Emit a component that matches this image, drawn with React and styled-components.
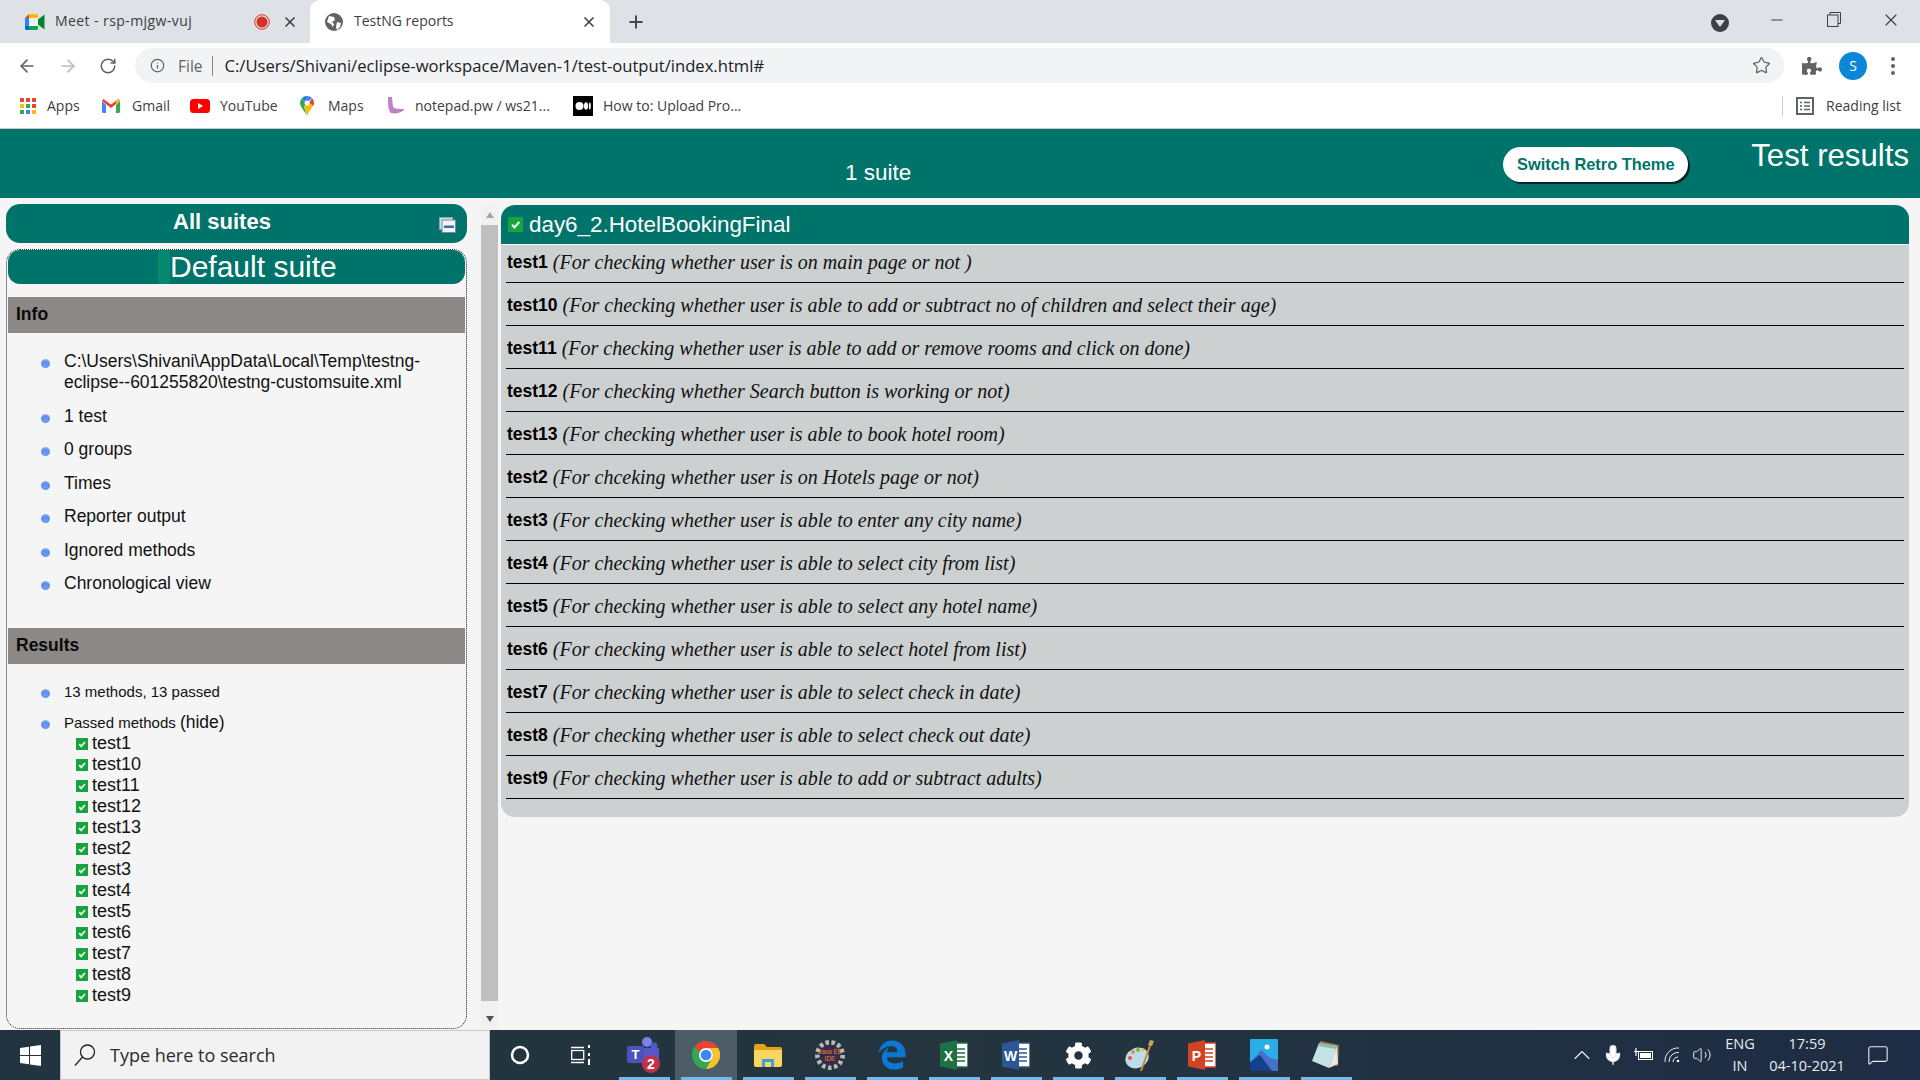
import React from "react";
import styled, { createGlobalStyle } from "styled-components";
import { ArrowLeft, ArrowRight, RotateCw, Info, Star, X, Plus, Minus, ChevronUp, Mic, Volume2, MessageSquare } from "lucide-react";
import { FaPuzzlePiece, FaCog } from "react-icons/fa";
import { FaEdgeLegacy } from "react-icons/fa6";

const TEAL = "#00746a";
const UI = '"Open Sans", "Liberation Sans", sans-serif';
const SANS = '"Liberation Sans", Arial, sans-serif';
const SERIF = '"Liberation Serif", "Times New Roman", serif';

const Global = createGlobalStyle`
  html, body { margin: 0; padding: 0; width: 1920px; height: 1080px; overflow: hidden; background: #f5f5f5; }
  * { box-sizing: border-box; }
`;

const Page = styled.div`display:flex;flex-direction:column;width:1920px;height:1080px;overflow:hidden;font-family:${SANS};color:#000;`;

/* Browser chrome */
const TabStrip = styled.div`display:flex;align-items:stretch;height:43px;background:#dee1e6;flex:none;`;
const Tab = styled.div`
  display:flex;align-items:center;width:${p => p.$w}px;padding-left:${p => p.$pl}px;
  font:14px ${UI};color:#3c4043;
  ${p => p.$active && "background:#fff;border-radius:10px 10px 0 0;"}
`;
const TabTitle = styled.span`margin-left:${p => p.$ml}px;flex:1;white-space:nowrap;margin-top:-2px;letter-spacing:${p => p.$ls || 0}px;`;
const TabClose = styled(X)`margin-right:${p => p.$mr}px;margin-left:${p => p.$ml || 0}px;color:#3c4043;flex:none;`;
const NewTab = styled(Plus)`align-self:center;margin-left:16px;color:#45494d;`;
const WindowControls = styled.div`margin-left:auto;margin-right:1px;display:flex;align-items:center;color:#3c4043;`;
const WindowBtn = styled.div`display:flex;justify-content:center;width:57px;margin-top:-4px;`;
const DownloadDot = styled.div`
  width:18px;height:18px;border-radius:50%;background:#3c4043;margin-right:19px;margin-top:2px;
  display:flex;align-items:center;justify-content:center;
  &::after{content:"";border-left:5px solid transparent;border-right:5px solid transparent;border-top:7px solid #dee1e6;margin-top:2px;}
`;

const Toolbar = styled.div`display:flex;align-items:center;height:40px;background:#fff;padding-top:5px;flex:none;`;
const NavIcons = styled.div`display:flex;align-items:center;gap:21px;padding-left:17px;width:135px;`;
const Omnibox = styled.div`
  display:flex;align-items:center;width:1649px;height:35px;border-radius:18px;background:#f1f3f4;padding-left:15px;
  font:14.5px ${UI};color:#5f6368;
`;
const OmniFile = styled.span`margin-left:13px;font-size:15.5px;`;
const OmniSep = styled.span`width:1px;height:20px;background:#80868b;margin:0 12px 0 9px;`;
const OmniUrl = styled.span`color:#202124;font-size:16.64px;flex:1;white-space:nowrap;`;
const OmniStar = styled(Star)`margin-right:13px;color:#5f6368;`;
const ToolIcons = styled.div`display:flex;align-items:center;color:#5f6368;padding-left:18px;`;
const Avatar = styled.div`
  width:28px;height:28px;border-radius:50%;background:#0b87da;color:#fff;font:14px ${UI};
  display:flex;align-items:center;justify-content:center;margin-left:17px;
`;
const MenuDots = styled.div`display:flex;flex-direction:column;gap:3px;margin-left:24px;
  span{width:4px;height:4px;border-radius:50%;background:#5f6368;}`;

const Bookmarks = styled.div`
  display:flex;align-items:center;height:46px;background:#fff;border-bottom:1px solid #c9cbcd;padding-left:20px;flex:none;
  font:14px ${UI};color:#3c4043;
`;
const Bookmark = styled.div`display:flex;align-items:center;width:${p => p.$w}px;white-space:nowrap;
  span{margin-left:${p => p.$gap}px;}`;
const BookmarkDivider = styled.div`width:1px;height:20px;background:#c9cbcd;margin-left:auto;`;
const ReadingList = styled.div`display:flex;align-items:center;gap:12px;margin:0 19px 0 13px;`;

/* Report header */
const ReportHeader = styled.div`display:flex;height:69px;background:${TEAL};color:#fff;flex:none;position:relative;`;
const SuiteCount = styled.div`font:22.5px ${SANS};margin:30px 0 0 845px;line-height:28px;`;
const ThemeBtn = styled.div`
  margin:18px 0 0 auto;width:185px;height:35px;border-radius:18px;background:#fff;color:${TEAL};padding-bottom:1px;
  box-shadow:2px 2px 0 #07232a;font:bold 16.4px ${SANS};display:flex;align-items:center;justify-content:center;
`;
const ReportTitle = styled.div`font:31.2px ${SANS};margin:9px 11px 0 63px;line-height:36px;white-space:nowrap;`;

/* Main */
const Main = styled.div`display:flex;height:832px;background:#f5f5f5;padding:6px 0 0 6px;flex:none;overflow:hidden;`;
const Sidebar = styled.div`width:461px;display:flex;flex-direction:column;flex:none;`;
const AllSuites = styled.div`
  height:39px;border-radius:14px;background:${TEAL};color:#fff;font:bold 22px ${SANS};position:relative;
  display:flex;align-items:center;justify-content:center;padding:0 29px 3px 0;
`;
const CollapseIcon = styled.svg`position:absolute;right:11px;top:13px;`;
const SuitePanel = styled.div`
  margin-top:6px;height:780px;border:1px dotted #222;border-radius:14px;padding:0 1px;flex:none;
`;
const DefaultSuite = styled.div`
  height:34px;border-radius:12px;background:${TEAL};color:#fff;font:30px ${SANS};line-height:34px;
  display:flex;padding-left:150px;
`;
const SuiteMark = styled.span`width:12px;background:#058a70;border-radius:2px;`;
const SectionHead = styled.div`
  margin-top:${p => p.$mt}px;height:36px;background:#8c8886;font:bold 17.5px ${SANS};padding:0 8px 1px;
  display:flex;align-items:center;color:#0a0a0a;
`;
const BulletList = styled.div`display:flex;flex-direction:column;gap:${p => p.$gap}px;padding:${p => p.$pt}px 0 0 33px;`;
const BulletRow = styled.div`display:flex;align-items:flex-start;font:${p => p.$fs || 17.5}px/21px ${SANS};color:#111;`;
const Bullet = styled.i`
  width:9px;height:9px;border-radius:50%;flex:none;margin:8px 14px 0 0;
  background:radial-gradient(circle at 50% 75%,#6d9cf5 0%,#5e8fe8 55%,#c9d8f5 100%);
`;
const Big = styled.span`font-size:17.5px;`;
const PassedList = styled.div`display:flex;flex-direction:column;padding-left:68px;`;
const PassedRow = styled.div`display:flex;align-items:center;gap:4px;height:21px;font:18px/21px ${SANS};color:#111;`;

/* Scrollbar */
const Scrollbar = styled.div`
  width:17px;margin-left:14px;background:#f1f1f1;display:flex;flex-direction:column;align-items:center;flex:none;
`;
const ArrowUp = styled.i`margin-top:8px;border-left:4.5px solid transparent;border-right:4.5px solid transparent;border-bottom:6px solid #a3a3a3;`;
const Thumb = styled.div`width:17px;height:776px;background:#bfbfbf;margin-top:7px;`;
const ArrowDown = styled.i`margin-top:15px;border-left:4.5px solid transparent;border-right:4.5px solid transparent;border-top:6px solid #505050;`;

/* Content */
const Content = styled.div`width:1408px;margin:1px 0 0 3px;flex:none;`;
const ClassHead = styled.div`
  height:39px;background:${TEAL};color:#fff;border-radius:14px 14px 0 0;display:flex;align-items:center;
  padding:0 0 0 7px;font:22.4px ${SANS};gap:6px;
`;
const MethodPanel = styled.div`
  margin-top:1px;background:#cdd0d1;border-radius:0 0 14px 14px;padding:0 5px 18px 5px;display:flex;flex-direction:column;gap:5px;
`;
const MethodRow = styled.div`
  height:38px;border-bottom:1px solid #000;display:flex;align-items:center;gap:5px;padding:0 0 3px 1px;white-space:nowrap;
`;
const MethodName = styled.b`font:bold 17.5px ${SANS};color:#000;`;
const MethodDesc = styled.em`font:italic 20px ${SERIF};color:#111;`;

/* Taskbar */
const Taskbar = styled.div`
  display:flex;align-items:stretch;height:50px;flex:none;color:#fff;
  background:linear-gradient(90deg,#22343f 0%,#24353f 50%,#1e2c45 100%);
`;
const StartBtn = styled.div`width:60px;display:flex;align-items:center;justify-content:center;`;
const SearchBox = styled.div`
  width:430px;background:#f2f2f2;border:1px solid #c8c8c8;display:flex;align-items:center;
  font:18px ${UI};color:#2b2b2b;padding-left:13px;gap:14px;
`;
const TaskApps = styled.div`display:flex;margin-left:-1px;`;
const TaskApp = styled.div`
  width:62px;display:flex;align-items:center;justify-content:center;position:relative;padding-right:${p => p.$pr || 0}px;
  ${p => p.$active && "background:#4d5d67;"}
  ${p => p.$running && `&::after{content:"";position:absolute;left:6px;right:5px;bottom:0;height:3px;background:#76b9ed;}`}
`;
const Tray = styled.div`display:flex;align-items:center;margin-left:auto;font:14px ${UI};color:#e8ebef;`;
const TrayIcons = styled.div`display:flex;align-items:center;gap:10px;`;
const TrayChevron = styled(ChevronUp)`margin:0 -4px;`;
const Lang = styled.div`display:flex;flex-direction:column;align-items:center;margin-left:5px;width:46px;line-height:22px;font-size:14.5px;`;
const Clock = styled.div`display:flex;flex-direction:column;align-items:center;margin-left:2px;width:84px;line-height:22px;font-size:14.5px;`;
const NotifyWrap = styled.div`margin:0 31px 0 18px;display:flex;`;

/* Drawn icons */
const Tick = ({ s = 12 }) => (
  <svg width={s} height={s} viewBox="0 0 12 12"><rect width="12" height="12" fill="#16a340" /><path d="M3.2 6.2 5.2 8.300 9 4" fill="none" stroke="#e8f6ea" strokeWidth="1.800" /></svg>
);
const MeetIcon = () => (
  <svg width="20" height="18" viewBox="0 0 20 18"><path d="M4 1 0 5h4z" fill="#ea4335" /><path d="M0 5h4v8H0z" fill="#2684fc" /><path d="M0 13h4v4H1.500A1.500 1.500 0 0 1 0 15.500z" fill="#0066da" /><path d="M4 1h7.500A1.500 1.500 0 0 1 13 2.500V5H4z" fill="#ffba00" /><path d="M4 13h9v2.500a1.500 1.500 0 0 1-1.500 1.500H4z" fill="#00ac47" /><path d="M4 5h9v8H4z" fill="#eef1f4" /><path d="M13 6.500 19.500 1.500V16.500L13 11.500z" fill="#00832d" /></svg>
);
const RecIcon = () => (
  <svg width="16" height="16" viewBox="0 0 16 16"><circle cx="8" cy="8" r="7.300" fill="none" stroke="#d93025" /><circle cx="8" cy="8" r="5.500" fill="#d93025" /></svg>
);
const GlobeIcon = () => (
  <svg width="18" height="18" viewBox="0 0 18 18"><circle cx="9" cy="9" r="9" fill="#5f6368" /><path d="M4 3l5 1 1 3-3 2 2 2-1 3-2-3-4-2zM12 9l4 1-1 4-3 3-1-3z" fill="#fff" /></svg>
);
const AppsIcon = () => (
  <svg width="16" height="16" viewBox="0 0 16 16">
    {[["#ea4335","#ea4335","#ea4335"],["#fbbc04","#34a853","#ea4335"],["#34a853","#4285f4","#fbbc04"]].map((r, y) => r.map((c, x) => <rect key={`${x}${y}`} x={x * 6} y={y * 6} width="4" height="4" fill={c} />))}
  </svg>
);
const GmailIcon = () => (
  <svg width="18" height="14" viewBox="0 0 18 14"><path d="M0 2v10.500A1.500 1.500 0 0 0 1.500 14H4V6z" fill="#4285f4" /><path d="M18 2v10.500a1.500 1.500 0 0 1-1.500 1.500H14V6z" fill="#34a853" /><path d="M0 2l9 7 9-7-1.500-2L9 5.500 1.500 0z" fill="#ea4335" /><path d="M14 2l2.500-2L18 2l-4 4z" fill="#fbbc04" /></svg>
);
const YTIcon = () => (
  <svg width="20" height="14" viewBox="0 0 20 14"><rect width="20" height="14" rx="3.500" fill="#f00" /><path d="M8 4l5 3-5 3z" fill="#fff" /></svg>
);
const MapsIcon = () => (
  <svg width="14" height="20" viewBox="0 0 14 20"><path d="M7 20C5 15 0 11 0 7a7 7 0 0 1 2-5l5 5-3 4c1 2 2 4 3 9z" fill="#34a853" /><path d="M2 2a7 7 0 0 1 5-2l-1 4-1 1z" fill="#1a73e8" /><path d="M7 0a7 7 0 0 1 5 2L7 7 5 5z" fill="#4285f4" /><path d="M12 2a7 7 0 0 1 2 5c0 1-.3 2-.8 3L9 7z" fill="#ea4335" /><path d="M13 10c-1.500 3-5 6-6 10 0-4-1-6-3-9l5-4z" fill="#fbbc04" /><circle cx="7" cy="7" r="2.500" fill="#fff" /></svg>
);
const NotepadIcon = () => (
  <svg width="17" height="18" viewBox="0 0 17 18"><path d="M1 0h4l1 10c2 2 6 2 11 2v1c-3 3-9 4-13 3C1 14 1 5 1 0z" fill="#c27fc6" /></svg>
);
const MediumIcon = () => (
  <svg width="20" height="20" viewBox="0 0 20 20"><rect width="20" height="20" fill="#000" /><circle cx="6.500" cy="10" r="4" fill="#fff" /><ellipse cx="13" cy="10" rx="2" ry="3.800" fill="#fff" /><ellipse cx="16.800" cy="10" rx="1" ry="3.500" fill="#fff" /></svg>
);
const ReadingIcon = () => (
  <svg width="18" height="18" viewBox="0 0 18 18" fill="none" stroke="#5f6368"><rect x="1" y="1" width="16" height="16" strokeWidth="2" /><path d="M4 5.500h2M8 5.500h6M4 9h2M8 9h6M4 12.500h2M8 12.500h6" strokeWidth="1.500" /></svg>
);
const WinLogo = () => (
  <svg width="21" height="21" viewBox="0 0 21 21" fill="#fff"><path d="M0 3l9-1.300V10H0zM10 1.500 21 0v10H10zM0 11h9v8.300L0 18zM10 11h11v10l-11-1.500z" /></svg>
);
const SearchGlass = () => (
  <svg width="22" height="24" viewBox="0 0 22 24" fill="none" stroke="#222" strokeWidth="1.300"><circle cx="13.500" cy="9" r="7" /><path d="M8.500 14 1 22.500" /></svg>
);
const Cortana = () => <svg width="20" height="20" viewBox="0 0 20 20"><circle cx="10" cy="10" r="8" fill="none" stroke="#fff" strokeWidth="2.500" /></svg>;
const TaskView = () => (
  <svg width="20" height="20" viewBox="0 0 20 20" fill="none" stroke="#fff" strokeWidth="1.300"><path d="M0 2.500h13M0 17.500h13" /><rect x=".7" y="5.500" width="12" height="9" /><path d="M18 0v3M18 8v3M18 14v6" strokeWidth="2" /></svg>
);
const Teams = () => (
  <svg width="34" height="36" viewBox="0 0 34 36"><circle cx="20" cy="5" r="5" fill="#7b83eb" /><circle cx="27" cy="9" r="3.500" fill="#5059c9" /><path d="M14 11h18v11a7 7 0 0 1-7 7h-4a7 7 0 0 1-7-7z" fill="#5059c9" /><rect x="0" y="9" width="17" height="17" rx="2" fill="#4b53bc" /><text x="8.500" y="22" textAnchor="middle" fontFamily="Liberation Sans" fontWeight="bold" fontSize="13" fill="#fff">T</text><circle cx="24" cy="27" r="9" fill="#c4314b" /><text x="24" y="32" textAnchor="middle" fontFamily="Liberation Sans" fontWeight="bold" fontSize="14" fill="#fff">2</text></svg>
);
const ChromeLogo = () => (
  <svg width="28" height="28" viewBox="0 0 24 24"><circle cx="12" cy="12" r="12" fill="#34a853" /><path d="M12 0a12 12 0 0 1 10.400 6H12a6 6 0 0 0-5.600 3.800L2.400 4.800A12 12 0 0 1 12 0z" fill="#ea4335" /><path d="M22.400 6A12 12 0 0 1 12 24l5.200-9A6 6 0 0 0 12 6z" fill="#fbc02d" /><circle cx="12" cy="12" r="6" fill="#fff" /><circle cx="12" cy="12" r="4.600" fill="#4285f4" /></svg>
);
const Folder = () => (
  <svg width="28" height="24" viewBox="0 0 28 24"><path d="M0 3a2 2 0 0 1 2-2h8l3 3h13a2 2 0 0 1 2 2v2H0z" fill="#e3a21a" /><path d="M0 7h28v15a2 2 0 0 1-2 2H2a2 2 0 0 1-2-2z" fill="#fcd55f" /><path d="M8 16h12v8h-3v-5h-6v5H8z" fill="#3b9fe0" /></svg>
);
const EclipseGear = () => (
  <svg width="30" height="30" viewBox="0 0 30 30">
    <circle cx="15" cy="15" r="12.500" fill="none" stroke="#b8b8b8" strokeWidth="5" strokeDasharray="3.500 2.500" />
    <circle cx="15" cy="15" r="10.500" fill="#3a2a4a" />
    <text x="15" y="13.500" textAnchor="middle" fontFamily="Liberation Sans" fontSize="6.500" fill="#e8862a">Java EE</text>
    <text x="15" y="21" textAnchor="middle" fontFamily="Liberation Sans" fontSize="6.500" fill="#e8862a">IDE</text>
  </svg>
);
const Office = ({ bg, letter, edge }) => (
  <svg width="28" height="30" viewBox="0 0 28 30"><rect x="12" y="3" width="16" height="24" fill="#fff" stroke={edge} strokeWidth="1.500" /><path d="M16 9h9M16 13h9M16 17h9M16 21h9" stroke={edge} strokeWidth="1.600" /><path d="M0 3.500 17 0v30L0 26.500z" fill={bg} /><text x="8.500" y="21" textAnchor="middle" fontFamily="Liberation Sans" fontWeight="bold" fontSize="14" fill="#fff">{letter}</text></svg>
);
const Palette = () => (
  <svg width="30" height="32" viewBox="0 0 30 32"><ellipse cx="12" cy="19" rx="12" ry="10" fill="#bcdcec" transform="rotate(-25 12 19)" /><circle cx="5" cy="19" r="2" fill="#e0564a" /><circle cx="8" cy="13" r="2" fill="#e58f3a" /><circle cx="13" cy="11" r="2" fill="#7ab648" /><circle cx="18" cy="11" r="1.800" fill="#e8c33c" /><path d="M26 4 16 32" stroke="#c98a3a" strokeWidth="2" /><path d="M23 6l2-5 4 1-2 5z" fill="#c9a36a" /></svg>
);
const Photos = () => (
  <svg width="28" height="32" viewBox="0 0 28 32"><rect width="28" height="32" rx="1" fill="#29aee8" /><circle cx="17" cy="8" r="2.500" fill="#fff" /><path d="M0 24 11 11l9 8 8 2v11H0z" fill="#4a6fc8" /><path d="M0 32V23l10-7 12 16z" fill="#15408a" /></svg>
);
const NotepadApp = () => (
  <svg width="28" height="30" viewBox="0 0 28 30"><path d="M8 1l19 4-1 21-19-4z" fill="#9b7a3c" /><path d="M7 3l18 3-8 22L0 21z" fill="#c4e4e4" /><path d="M17 28l8-22 1 18z" fill="#e8e8e8" /><path d="M7 3l18 3-1 3L6 6z" fill="#8fb8b8" /></svg>
);
const BatteryIcon = () => (
  <svg width="20" height="14" viewBox="0 0 20 14" fill="none" stroke="#fff"><rect x="4.500" y="3.500" width="14" height="8" /><rect x="6" y="5" width="11" height="5" fill="#fff" stroke="none" /><path d="M2 0v3M0 3.500h4M2 4v4" strokeWidth="1.200" /></svg>
);
const WifiArcs = () => (
  <svg width="18" height="18" viewBox="0 0 18 18" fill="none" stroke="#e8ebef"><path d="M1 16A13 13 0 0 1 15 2M5 16A9 9 0 0 1 15 6.500M9 16a5 5 0 0 1 5-5" /><circle cx="14" cy="15" r="1.300" fill="#fff" stroke="none" /></svg>
);

const methods = [
  ["test1", "(For checking whether user is on main page or not )"],
  ["test10", "(For checking whether user is able to add or subtract no of children and select their age)"],
  ["test11", "(For checking whether user is able to add or remove rooms and click on done)"],
  ["test12", "(For checking whether Search button is working or not)"],
  ["test13", "(For checking whether user is able to book hotel room)"],
  ["test2", "(For chceking whether user is on Hotels page or not)"],
  ["test3", "(For checking whether user is able to enter any city name)"],
  ["test4", "(For checking whether user is able to select city from list)"],
  ["test5", "(For checking whether user is able to select any hotel name)"],
  ["test6", "(For checking whether user is able to select hotel from list)"],
  ["test7", "(For checking whether user is able to select check in date)"],
  ["test8", "(For checking whether user is able to select check out date)"],
  ["test9", "(For checking whether user is able to add or subtract adults)"],
];

const infoItems = ["1 test", "0 groups", "Times", "Reporter output", "Ignored methods", "Chronological view"];

const taskApps = [
  <EclipseGear key="a" />,
  <FaEdgeLegacy key="b" size={30} color="#0a78d4" />,
  <Office key="c" bg="#1e7145" letter="X" edge="#1e7145" />,
  <Office key="d" bg="#2b5797" letter="W" edge="#2b5797" />,
  <FaCog key="e" size={27} color="#fff" />,
  <Palette key="f" />,
  <Office key="g" bg="#d04423" letter="P" edge="#d04423" />,
  <Photos key="h" />,
  <NotepadApp key="i" />,
];

export default function App() {
  return (
    <Page>
      <Global />
      <TabStrip>
        <Tab $w={310} $pl={25}>
          <MeetIcon />
          <TabTitle $ml={10} $ls={0.42}>Meet - rsp-mjgw-vuj</TabTitle>
          <RecIcon />
          <TabClose size={16} strokeWidth={2.5} $ml={12} $mr={12} />
        </Tab>
        <Tab $w={300} $pl={15} $active>
          <GlobeIcon />
          <TabTitle $ml={11}>TestNG reports</TabTitle>
          <TabClose size={16} strokeWidth={2.5} $mr={13} />
        </Tab>
        <NewTab size={20} strokeWidth={2.4} />
        <WindowControls>
          <DownloadDot />
          <WindowBtn><Minus size={18} strokeWidth={1.4} /></WindowBtn>
          <WindowBtn><svg width="14" height="15" viewBox="0 0 14 15" fill="none" stroke="#3c4043"><rect x=".5" y="3" width="10.500" height="11.500" /><path d="M3 3V.5h10.500v11H11" /></svg></WindowBtn>
          <WindowBtn><X size={20} strokeWidth={1.4} /></WindowBtn>
        </WindowControls>
      </TabStrip>
      <Toolbar>
        <NavIcons>
          <ArrowLeft size={20} color="#5f6368" strokeWidth={2} />
          <ArrowRight size={20} color="#babcbe" strokeWidth={2} />
          <RotateCw size={18} color="#5f6368" strokeWidth={2} />
        </NavIcons>
        <Omnibox>
          <Info size={15} color="#5f6368" strokeWidth={2} />
          <OmniFile>File</OmniFile>
          <OmniSep />
          <OmniUrl>C:/Users/Shivani/eclipse-workspace/Maven-1/test-output/index.html#</OmniUrl>
          <OmniStar size={19} strokeWidth={1.6} />
        </Omnibox>
        <ToolIcons>
          <FaPuzzlePiece size={20} />
          <Avatar>S</Avatar>
          <MenuDots><span /><span /><span /></MenuDots>
        </ToolIcons>
      </Toolbar>
      <Bookmarks>
        <Bookmark $w={82} $gap={11}><AppsIcon /><span>Apps</span></Bookmark>
        <Bookmark $w={88} $gap={12}><GmailIcon /><span>Gmail</span></Bookmark>
        <Bookmark $w={110} $gap={10}><YTIcon /><span>YouTube</span></Bookmark>
        <Bookmark $w={87} $gap={14}><MapsIcon /><span>Maps</span></Bookmark>
        <Bookmark $w={186} $gap={11}><NotepadIcon /><span>notepad.pw / ws21...</span></Bookmark>
        <Bookmark $w={170} $gap={10}><MediumIcon /><span>How to: Upload Pro...</span></Bookmark>
        <BookmarkDivider />
        <ReadingList><ReadingIcon /><span>Reading list</span></ReadingList>
      </Bookmarks>
      <ReportHeader>
        <SuiteCount>1 suite</SuiteCount>
        <ThemeBtn>Switch Retro Theme</ThemeBtn>
        <ReportTitle>Test results</ReportTitle>
      </ReportHeader>
      <Main>
        <Sidebar>
          <AllSuites>
            All suites
            <CollapseIcon width="17" height="16" viewBox="0 0 17 16">
              <rect x=".5" y=".5" width="13" height="12" fill="#cfe0ea" stroke="#8aa6b8" />
              <rect x="3" y="3" width="13.500" height="12.500" fill="#eef4f8" stroke="#6f8ea4" />
              <rect x="5" y="8.500" width="10" height="2.500" fill="#3f6f96" />
            </CollapseIcon>
          </AllSuites>
          <SuitePanel>
            <DefaultSuite><SuiteMark />Default suite</DefaultSuite>
            <SectionHead $mt={13}>Info</SectionHead>
            <BulletList $pt={18} $gap={12.5}>
              <BulletRow><Bullet /><span>C:\Users\Shivani\AppData\Local\Temp\testng-<br />eclipse--601255820\testng-customsuite.xml</span></BulletRow>
              {infoItems.map(t => <BulletRow key={t}><Bullet /><span>{t}</span></BulletRow>)}
            </BulletList>
            <SectionHead $mt={34}>Results</SectionHead>
            <BulletList $pt={17} $gap={10}>
              <BulletRow $fs={15}><Bullet /><span>13 methods, 13 passed</span></BulletRow>
              <BulletRow $fs={15}><Bullet /><span>Passed methods <Big>(hide)</Big></span></BulletRow>
            </BulletList>
            <PassedList>
              {methods.map(([n]) => <PassedRow key={n}><Tick /><span>{n}</span></PassedRow>)}
            </PassedList>
          </SuitePanel>
        </Sidebar>
        <Scrollbar>
          <ArrowUp />
          <Thumb />
          <ArrowDown />
        </Scrollbar>
        <Content>
          <ClassHead><Tick s={15} /><span>day6_2.HotelBookingFinal</span></ClassHead>
          <MethodPanel>
            {methods.map(([n, d]) => (
              <MethodRow key={n}><MethodName>{n}</MethodName><MethodDesc>{d}</MethodDesc></MethodRow>
            ))}
          </MethodPanel>
        </Content>
      </Main>
      <Taskbar>
        <StartBtn><WinLogo /></StartBtn>
        <SearchBox><SearchGlass /><span>Type here to search</span></SearchBox>
        <TaskApps>
          <TaskApp><Cortana /></TaskApp>
          <TaskApp $pr={3}><TaskView /></TaskApp>
          <TaskApp $running><Teams /></TaskApp>
          <TaskApp $active $running><ChromeLogo /></TaskApp>
          <TaskApp $running><Folder /></TaskApp>
          {taskApps.map((icon, i) => <TaskApp key={i} $running>{icon}</TaskApp>)}
        </TaskApps>
        <Tray>
          <TrayIcons>
            <TrayChevron size={28} strokeWidth={1} />
            <Mic size={22} strokeWidth={1.6} fill="#fff" />
            <BatteryIcon />
            <WifiArcs />
            <Volume2 size={20} strokeWidth={1.2} />
          </TrayIcons>
          <Lang><span>ENG</span><span>IN</span></Lang>
          <Clock><span>17:59</span><span>04-10-2021</span></Clock>
          <NotifyWrap><MessageSquare size={22} strokeWidth={1.2} /></NotifyWrap>
        </Tray>
      </Taskbar>
    </Page>
  );
}
